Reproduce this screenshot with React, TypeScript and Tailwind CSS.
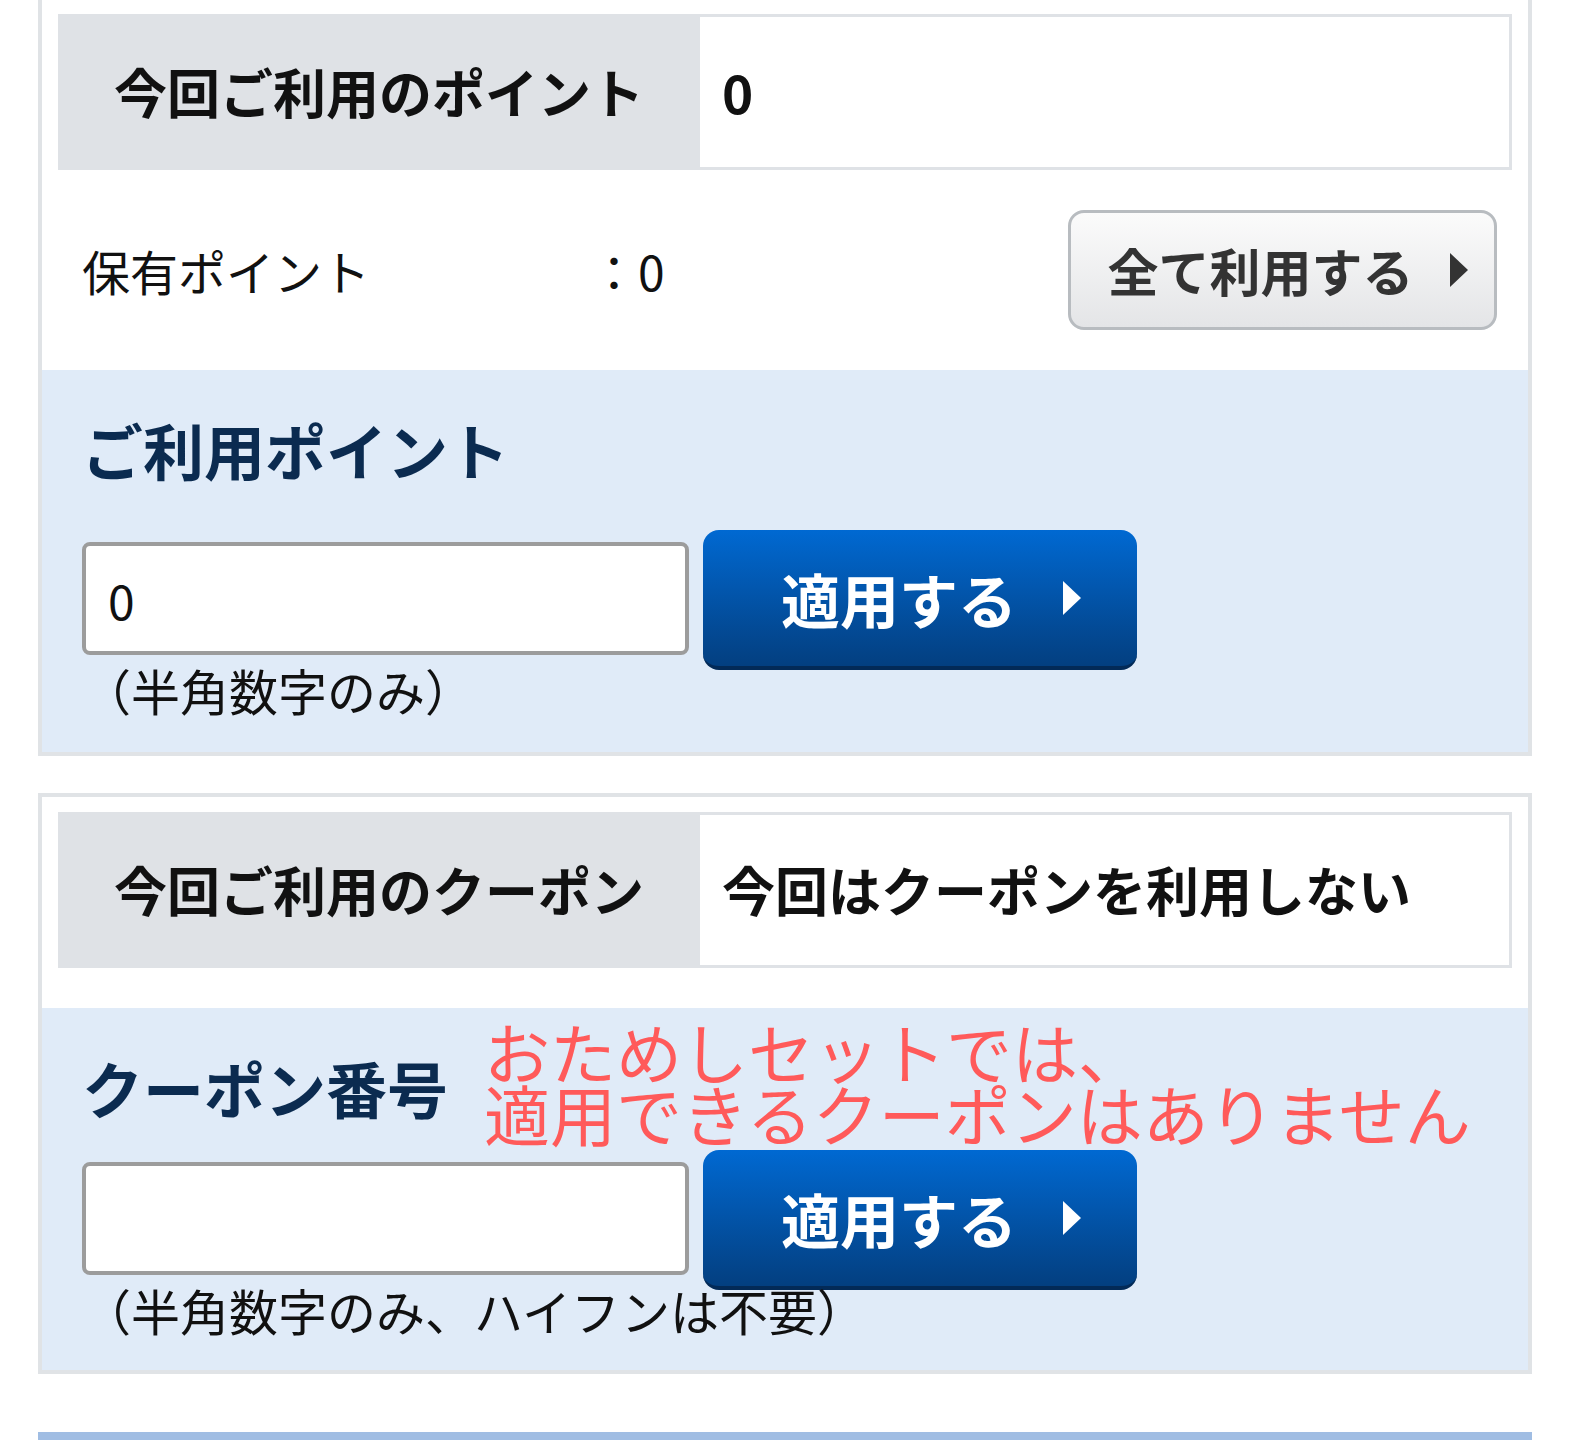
const FONT = "font-['Noto_Sans_CJK_JP','Noto_Sans',sans-serif]";

function Arrow({ className }: { className: string }) {
  return (
    <svg width="18" height="34" viewBox="0 0 18 34" className={className}>
      <polygon points="0,0 18,17 0,34" fill="currentColor" />
    </svg>
  );
}

function ApplyButton() {
  return (
    <button className="ml-[14px] flex h-[140px] w-[434px] shrink-0 items-center justify-center gap-[46px] rounded-[16px] border-b-[4px] border-[#032a57] bg-gradient-to-b from-[#0069d2] to-[#033f80] pl-[22px] text-white">
      <span className="text-[59px] font-bold leading-none">適用する</span>
      <Arrow className="text-white" />
    </button>
  );
}

function SummaryRow({ label, value }: { label: string; value: string }) {
  return (
    <div className="mx-4 flex h-[156px] bg-[#dfe2e6] py-[3px] pr-[3px]">
      <div className="flex w-[642px] shrink-0 items-center justify-center text-[53px] font-bold text-[#111]">
        {label}
      </div>
      <div className="flex flex-1 items-center bg-white pl-[22px] text-[53px] font-bold text-[#111]">
        {value}
      </div>
    </div>
  );
}

function InputColumn({ value, note }: { value: string; note: string }) {
  return (
    <div className="flex w-[607px] shrink-0 flex-col">
      <div className="mt-[12px] flex h-[113px] items-center rounded-[8px] border-[4px] border-[#9c9c9c] bg-white pl-[22px] text-[48px] text-[#111]">
        {value}
      </div>
      <p className="relative z-10 mt-[12px] whitespace-nowrap text-[49px] leading-[46px] text-[#111]">
        {note}
      </p>
    </div>
  );
}

export default function App() {
  return (
    <div className={`min-h-[1440px] bg-white px-[38px] ${FONT}`}>
      {/* Points card */}
      <div className="border-x-4 border-b-4 border-[#e0e3e6] pt-[14px]">
        <SummaryRow label="今回ご利用のポイント" value="0" />

        <div className="flex h-[200px] items-center pl-[40px] pr-[31px]">
          <span className="w-[508px] text-[48px] text-[#111]">保有ポイント</span>
          <span className="text-[48px] text-[#111]">：0</span>
          <button className="ml-auto flex h-[120px] w-[429px] items-center justify-center gap-[36px] rounded-[16px] border-[3px] border-[#b8bcc0] bg-gradient-to-b from-[#fbfbfb] to-[#e4e5e7] pl-[10px] text-[#333]">
            <span className="text-[51px] font-bold leading-none">全て利用する</span>
            <Arrow className="text-[#333]" />
          </button>
        </div>

        <div className="h-[382px] bg-[#e0ebf8] px-[40px] pt-[50px]">
          <h2 className="text-[61px] font-bold leading-[60px] text-[#0b2b50]">ご利用ポイント</h2>
          <div className="mt-[50px] flex items-start">
            <InputColumn value="0" note="（半角数字のみ）" />
            <ApplyButton />
          </div>
        </div>
      </div>

      {/* Coupon card */}
      <div className="mt-[37px] border-4 border-[#e0e3e6] pt-[15px]">
        <SummaryRow label="今回ご利用のクーポン" value="今回はクーポンを利用しない" />

        <div className="mt-[40px] h-[362px] bg-[#e0ebf8] px-[40px] pt-[11px]">
          <div className="flex items-start gap-[36px]">
            <h2 className="mt-[39px] text-[61px] font-bold leading-[60px] text-[#0b2b50]">クーポン番号</h2>
            <p className="text-[66px] leading-[62px] text-[#ff5a5a]">
              おためしセットでは、
              <br />
              適用できるクーポンはありません
            </p>
          </div>
          <div className="mt-[7px] flex items-start">
            <InputColumn value="" note="（半角数字のみ、ハイフンは不要）" />
            <ApplyButton />
          </div>
        </div>
      </div>

      <div className="mt-[58px] h-[20px] bg-[#a0bde3]" />
    </div>
  );
}
